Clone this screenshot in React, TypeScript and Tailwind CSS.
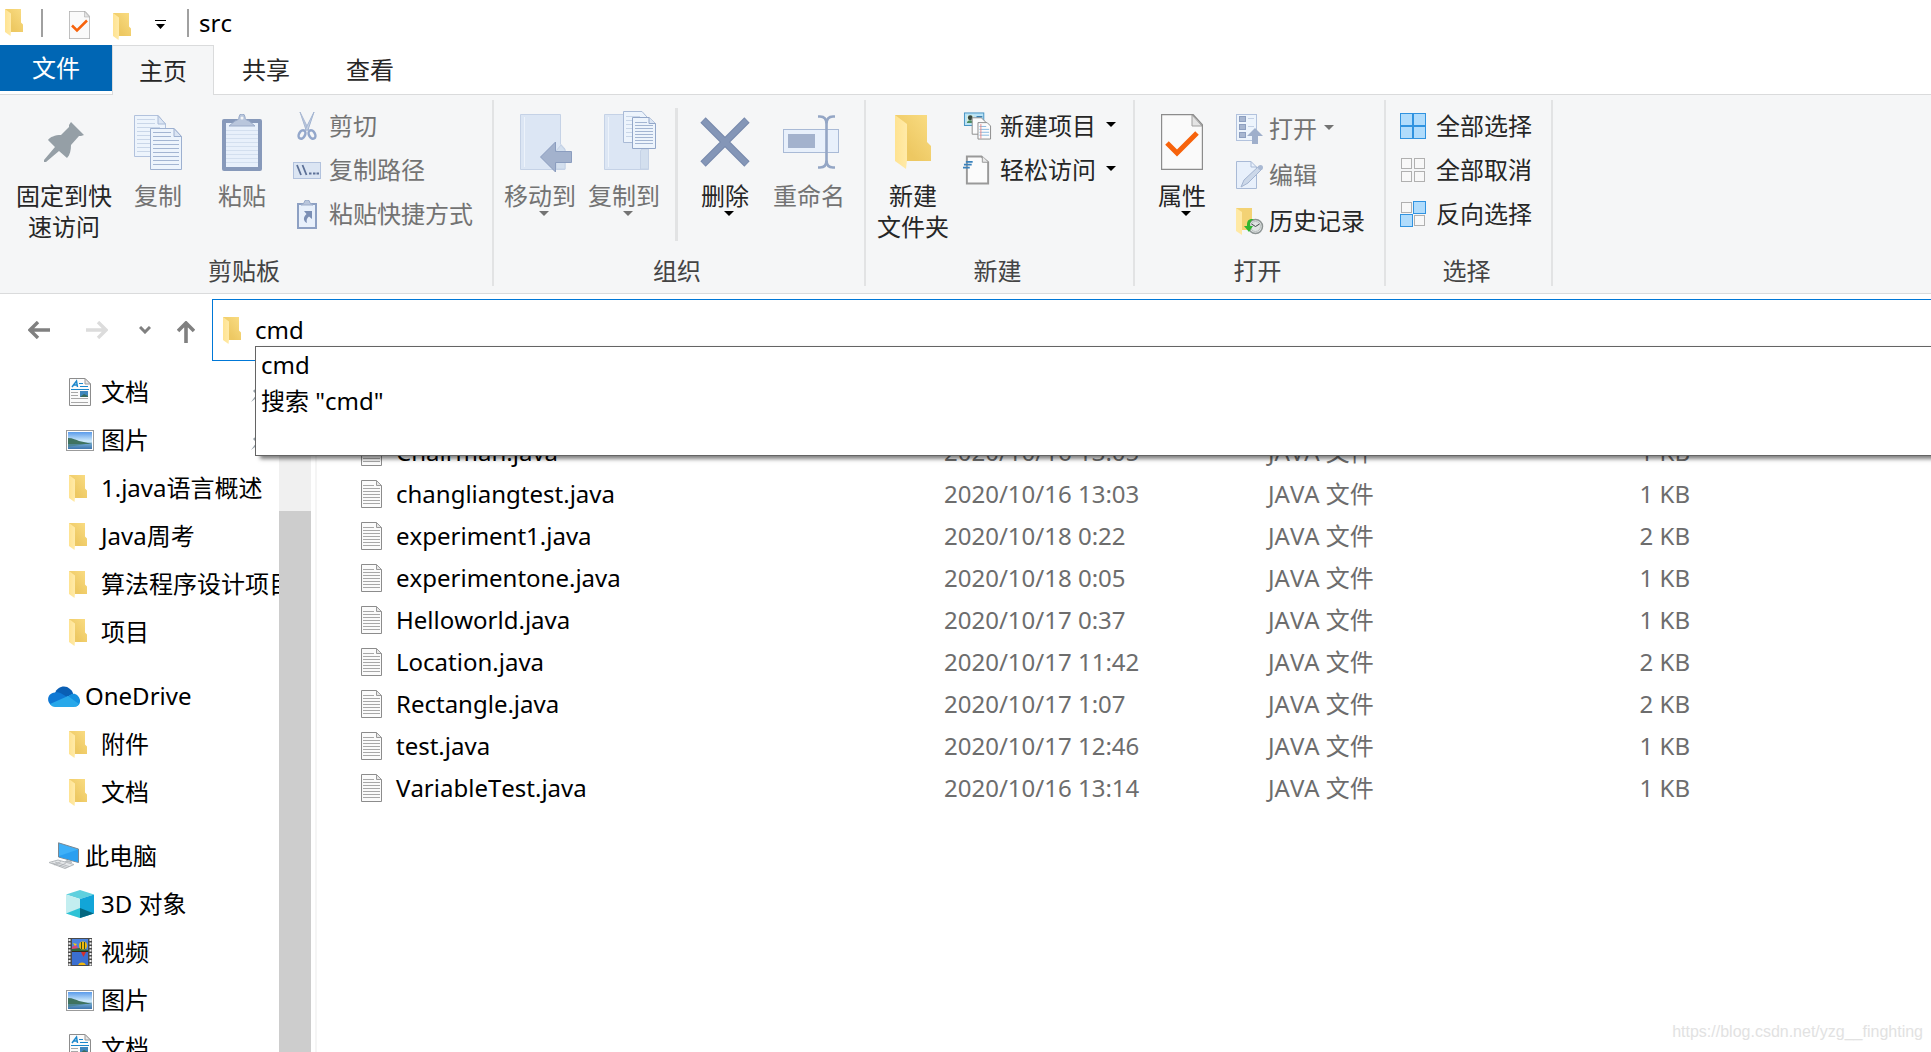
import React, { useState } from "react";
import clsx from "clsx";

/* ---------- icons ---------- */

function FolderIcon({ className = "w-[18px] h-[27px]" }) {
  return (
    <svg viewBox="0 0 36 54" preserveAspectRatio="none" className={className}>
      <defs>
        <linearGradient id="folderBack" x1="0" x2="1" y1="1" y2="0">
          <stop offset="0.3" stopColor="#edc862" />
          <stop offset="1" stopColor="#fadd84" />
        </linearGradient>
        <linearGradient id="folderFlap" x1="0" x2="1">
          <stop offset="0" stopColor="#ffe391" />
          <stop offset="1" stopColor="#ffeaa8" />
        </linearGradient>
      </defs>
      <path d="M0 0H32V27L36 31V46H4Z" fill="url(#folderBack)" />
      <path d="M0 0L12 9V45L11 54L0 46Z" fill="url(#folderFlap)" />
    </svg>
  );
}

function CheckDocIcon({ className = "w-[21px] h-7" }) {
  return (
    <svg viewBox="0 0 42 56" className={className}>
      <path d="M.5 .5H32L41.500 11V55.500H.5Z" fill="#fafafa" stroke="#8c8c8c" strokeWidth="1.400" />
      <path d="M31 1V12H41Z" fill="#e4e4e4" stroke="#a0a0a0" strokeWidth="1" />
      <path d="M6 29L16 39L36 19" fill="none" stroke="#f7630c" strokeWidth="5" />
    </svg>
  );
}

function PinIcon() {
  return (
    <svg viewBox="0 0 40 40" className="w-10 h-10">
      <path
        d="M27 0L40 13L37 14L35 14L27 23C27 28 26 33 23 36L15 29L2 40L0 40V38L11 25L4 18C6 15 11 13 17 13L25 5L25 3Z"
        fill="#959fa6"
      />
    </svg>
  );
}

function CopyIcon() {
  return (
    <svg viewBox="0 0 48 55" className="w-12 h-[55px]">
      <path d="M.5 .5H24L31.500 9V41.500H.5Z" fill="#edf4fc" stroke="#b2c2dd" />
      <path d="M24 .5V9H31.500Z" fill="#dbe5f3" stroke="#a9bad6" />
      <path d="M3 4.500H21M3 8.500H21M3 12.500H26M3 16.500H28M3 20.500H28M3 24.500H28M3 28.500H28M3 32.500H28M3 36.500H28" stroke="#c9d6e8" />
      <path d="M16.500 13.500H40L47.500 21.500V54.500H16.500Z" fill="#edf4fc" stroke="#9db0d0" />
      <path d="M40 13.500V21.500H47.500Z" fill="#dbe5f3" stroke="#9db0d0" />
      <path d="M19 17.500H37M19 21.500H37M19 25.500H45M19 29.500H45M19 33.500H45M19 37.500H45M19 41.500H45M19 45.500H45M19 49.500H45" stroke="#a3b5d2" />
    </svg>
  );
}

function PasteIcon() {
  return (
    <svg viewBox="0 0 40 57" className="w-10 h-[57px]">
      <rect y="5" width="40" height="52" rx="2" fill="#8799ba" />
      <rect x="4" y="9" width="32" height="44" fill="#e8f0fb" />
      <path d="M4 16.500H36M4 20.500H36M4 24.500H36M4 28.500H36M4 32.500H36M4 36.500H36M4 40.500H36M4 44.500H36M4 48.500H36" stroke="#d3dfef" />
      <path d="M7 12L13 7C16 6 17 5 17 3A3 3 0 0 1 23 3C23 5 24 6 27 7L33 12Z" fill="#b9c6dc" stroke="#9aabc9" />
      <circle cx="20" cy="4" r="1.500" fill="#f5f6f7" />
    </svg>
  );
}

function CutIcon() {
  return (
    <svg viewBox="0 0 20 28" className="w-5 h-7">
      <path d="M3 0L12 18L9 18Z" fill="#b7c5dc" stroke="#aab9d3" />
      <path d="M17 0L8 18L11 18Z" fill="#c3cfe2" stroke="#a3b4d1" />
      <ellipse cx="5" cy="22.500" rx="3" ry="4.500" transform="rotate(28 5 22.500)" fill="none" stroke="#93a7cb" strokeWidth="2.500" />
      <ellipse cx="15" cy="22.500" rx="3" ry="4.500" transform="rotate(-28 15 22.500)" fill="none" stroke="#93a7cb" strokeWidth="2.500" />
    </svg>
  );
}

function PathIcon() {
  return (
    <svg viewBox="0 0 28 17" className="w-7 h-[17px]">
      <rect x=".5" y=".5" width="27" height="16" fill="#dbe5f3" stroke="#b2c2dd" />
      <path d="M4 3L8 13M9.500 3L13.500 13" stroke="#5d7197" strokeWidth="1.800" />
      <path d="M16 11.500H18.500M20 11.500H22.500M23.500 11.500H26" stroke="#5d7197" strokeWidth="2" />
    </svg>
  );
}

function ShortcutIcon() {
  return (
    <svg viewBox="0 0 20 29" className="w-5 h-[29px]">
      <rect x="1" y="4" width="18" height="24" fill="#e8f0fb" stroke="#8da0c3" strokeWidth="2" />
      <path d="M4 5H16L13 3A3 3 0 0 0 7 3Z" fill="#b9c6dc" stroke="#9aabc9" />
      <path d="M7 11H15V19L12 16.500C10 18 9 20 10 23C6 21 6 17 9.500 14Z" fill="#7b8fb5" />
    </svg>
  );
}

function MoveToIcon() {
  return (
    <svg viewBox="0 0 52 62" className="w-[52px] h-[62px] ml-3">
      <path d="M.5 3.500H40.500V33L45 38V58.500H.5Z" fill="#dce6f4" stroke="#c5d2e6" />
      <path d="M4.500 6V56" stroke="#edf3fb" />
      <path d="M36 40L41 34L45 39V58H36Z" fill="#d3dfee" stroke="#c5d2e6" />
      <path d="M20.500 46L35.500 31V40.500H51.500V51.500H35.500V61Z" fill="#a3b2cd" stroke="#8b9dbf" />
    </svg>
  );
}

function CopyToIcon() {
  return (
    <svg viewBox="0 0 52 62" className="w-[52px] h-[62px] ml-3">
      <path d="M.5 3.500H40.500V36L44.500 40V58.500H.5Z" fill="#dce6f4" stroke="#c5d2e6" />
      <path d="M4.500 6V56" stroke="#edf3fb" />
      <path d="M36.500 58V40L38 38H44.500V58Z" fill="#d3dfee" stroke="#c5d2e6" />
      <path d="M19.500 .5H38L43 6V31.500H19.500Z" fill="#edf4fc" stroke="#a9bad6" />
      <path d="M22 5.500H36M22 9.500H28M22 13.500H28M22 17.500H28M22 21.500H28M22 25.500H28" stroke="#c9d6e8" />
      <path d="M28.500 6.500H45L51.500 12.500V37.500H28.500Z" fill="#edf4fc" stroke="#93a7c9" />
      <path d="M45 6.500V12.500H51.500" fill="#dbe5f3" stroke="#93a7c9" />
      <path d="M31 11.500H43M31 14.500H49M31 17.500H49M31 20.500H49M31 23.500H49M31 26.500H49M31 29.500H49M31 32.500H49" stroke="#a3b5d2" />
    </svg>
  );
}

function DeleteIcon() {
  return (
    <svg viewBox="0 0 50 50" className="w-[50px] h-[50px]">
      <path d="M3 3L47 47M47 3L3 47" stroke="#7688ac" strokeWidth="7.500" />
      <path d="M3.500 3.500L46.500 46.500M46.500 3.500L3.500 46.500" stroke="#8496b7" strokeWidth="5.500" />
    </svg>
  );
}

function RenameIcon() {
  return (
    <svg viewBox="0 0 56 54" className="w-14 h-[54px] ml-1">
      <rect x=".5" y="14.500" width="55" height="23" fill="#e8f0fb" stroke="#a9bad6" />
      <rect x="5" y="19" width="27" height="14" fill="#a3b2cd" />
      <path d="M35 1.500H37Q43.500 1.500 43.500 9V45Q43.500 52.500 37 52.500H35M52 1.500H50Q43.500 1.500 43.500 9V45Q43.500 52.500 50 52.500H52" fill="none" stroke="#94a6c5" strokeWidth="2.600" />
    </svg>
  );
}

function NewItemIcon() {
  return (
    <svg viewBox="0 0 30 28" className="w-[30px] h-7">
      <rect x="1.500" y=".5" width="20" height="13" fill="#b9e3f7" stroke="#4592c2" />
      <rect x="4" y="3" width="7" height="8" fill="#d9efdf" />
      <circle cx="7.500" cy="5.500" r="2.500" fill="#38473d" />
      <path d="M4 11C4 7 11 7 11 11Z" fill="#4b8c62" />
      <path d="M14 4.500H20" stroke="#2e75a8" strokeWidth="1.500" />
      <path d="M9.500 5.500H19L23.500 10V22.500H9.500Z" fill="#fcfcfc" stroke="#8c8c8c" />
      <path d="M15.500 10.500H25L28.500 14V27.500H15.500Z" fill="#fcfcfc" stroke="#8c8c8c" />
      <path d="M17 14.500H24M17 17.500H27M17 20.500H27M17 23.500H27" stroke="#88b8e0" />
      <path d="M18.500 12V27" stroke="#e58a8a" />
    </svg>
  );
}

function EasyAccessIcon() {
  return (
    <svg viewBox="0 0 30 30" className="w-[30px] h-[30px]">
      <path d="M4 1H19L26 7V29H4Z" fill="#fbfbfb" stroke="#999999" strokeWidth="2" />
      <path d="M20 1V7H26" fill="#e8e8e8" stroke="#999999" />
      <path d="M3 6.500H10M1 9.500H9M0 12.500H7" stroke="#3a82bc" strokeWidth="1.800" />
    </svg>
  );
}

function OpenIcon() {
  return (
    <svg viewBox="0 0 28 30" className="w-7 h-[30px]">
      <rect x=".5" y=".5" width="20" height="26" fill="#edf4fc" stroke="#b2c2dd" />
      <g fill="#a7b6d0" stroke="#8d9fc0">
        <rect x="3.500" y="2.500" width="6" height="5" />
        <rect x="3.500" y="10.500" width="6" height="5" />
        <rect x="3.500" y="18.500" width="6" height="5" />
      </g>
      <path d="M12 4.500H18M12 12.500H18" stroke="#c4d1e5" />
      <path d="M19 14L27 22H22V30H16V22H11Z" fill="#9fafcb" />
    </svg>
  );
}

function EditIcon() {
  return (
    <svg viewBox="0 0 28 30" className="w-7 h-[30px]">
      <path d="M.5 1.500H15L20.500 7V28.500H.5Z" fill="#e8f0fb" stroke="#a9bad6" />
      <path d="M15 1.500V7H20.500" fill="none" stroke="#a9bad6" />
      <path d="M5 27L8 20L23 6L26 9L12 23Z" fill="#ccd8e9" stroke="#a3b4d0" />
      <circle cx="24.500" cy="7.500" r="2.500" fill="#a9b9d3" />
    </svg>
  );
}

function HistoryIcon() {
  return (
    <svg viewBox="0 0 28 30" className="w-7 h-[30px]">
      <path d="M0 2H16V24H2Z" fill="#f3d274" />
      <path d="M0 2L6 6V29L0 25Z" fill="#ffe9a4" />
      <circle cx="19.500" cy="20.500" r="7" fill="#dfe3e3" stroke="#8d9494" strokeWidth="1.500" />
      <circle cx="19.500" cy="20.500" r="5" fill="none" stroke="#b9bfbf" />
      <path d="M15.500 18L19.500 20.500L23.500 18" fill="none" stroke="#414747" />
      <path d="M15 13C11 14 11 17 11 20H8L13 26L17 20H14C14 17 14 15 18 13Z" fill="#2fb52f" />
    </svg>
  );
}

// tiles are listed top-left, top-right, bottom-left, bottom-right
function TilesIcon({ filled }: { filled: boolean[] }) {
  const spots = [[1, 1], [14, 1], [1, 14], [14, 14]];
  return (
    <svg viewBox="0 0 27 27" className="w-[27px] h-[27px]">
      {spots.map(([x, y], i) =>
        filled[i] ? (
          <rect key={i} x={x - 0.5} y={y - 0.5} width="12" height="12" fill="#b0dcfc" stroke="#3093e0" />
        ) : (
          <rect key={i} x={x + 0.5} y={y + 0.5} width="10" height="10" fill="#f8f8f8" stroke="#b0b0b0" />
        )
      )}
    </svg>
  );
}

function TextFileIcon() {
  return (
    <svg viewBox="0 0 21 28" className="w-[21px] h-7">
      <path d="M.5 .5H15.500L20.500 5.500V27.500H.5Z" fill="#fbfbfb" stroke="#8c8c8c" />
      <path d="M15.500 .5V5.500H20.500Z" fill="#e6e6e6" stroke="#9a9a9a" />
      <path d="M2 5.500H13M2 8.500H19M2 11.500H19M2 14.500H19M2 17.500H19M2 20.500H19M2 23.500H19" stroke="#a8a8a8" />
    </svg>
  );
}

function DocumentsIcon() {
  return (
    <svg viewBox="0 0 28 28" className="w-7 h-7">
      <path d="M3.500 .5H19L24.500 6V27.500H3.500Z" fill="#fbfbfb" stroke="#8c8c8c" />
      <path d="M19 .5V6H24.500Z" fill="#e6e6e6" stroke="#9a9a9a" />
      <path d="M6 9L10.500 3L11.500 9M7.500 7H11" fill="none" stroke="#1b87cc" strokeWidth="1.500" />
      <path d="M13 5.500H17M14 8.500H22M5 11.500H23" stroke="#1b87cc" />
      <rect x="14" y="13" width="8" height="6" fill="#3f86bd" />
      <path d="M14 19L18 16L22 18V19Z" fill="#3a6b5c" />
      <path d="M5 14.500H12M5 17.500H12M5 20.500H22M5 24.500H22" stroke="#a8a8a8" />
    </svg>
  );
}

function PicturesIcon() {
  return (
    <svg viewBox="0 0 28 21" className="w-7 h-[21px]">
      <defs>
        <linearGradient id="sky" x1="0" x2="0" y1="0" y2="1">
          <stop offset="0" stopColor="#5a9bea" />
          <stop offset="0.55" stopColor="#d2ecfb" />
          <stop offset="0.7" stopColor="#6fa5cf" />
          <stop offset="1" stopColor="#3d75ad" />
        </linearGradient>
      </defs>
      <rect x=".5" y=".5" width="27" height="20" fill="#ffffff" stroke="#9b9b9b" />
      <rect x="2" y="2" width="24" height="17" fill="url(#sky)" />
      <path d="M2 8C7 8 10 10 13 11C18 12 22 13 26 14H2Z" fill="#3f7360" />
      <path d="M2 14H20L8 16L2 17Z" fill="#4e8797" />
    </svg>
  );
}

function OneDriveIcon() {
  return (
    <svg viewBox="0 0 32 21" className="w-8 h-[21px]">
      <path d="M7 7C9 1 17 -2 22 3C24 5 25 6 25 8L15 13Z" fill="#0a5fb4" />
      <path d="M6 20C-2 19 -2 7 7 6.500C10 5.500 13 7 15 8.500L21 12L9 20Z" fill="#0f78d4" />
      <path d="M19 11L22 9C26 6 31 9 32 14C32.500 18 30 20.500 27 20.500Z" fill="#1490df" />
      <path d="M2 18L20 10L31 18C30 20 28 21 26 21H7C5 21 3 20 2 18Z" fill="#28a8ea" />
    </svg>
  );
}

function ThisPcIcon() {
  return (
    <svg viewBox="0 0 32 28" className="w-8 h-7">
      <path d="M10.500 .8L30.500 7V20.500L10.500 15Z" fill="#3eb0f8" stroke="#7b8791" />
      <path d="M11 14L30 7.500V20L11 14.800Z" fill="#2a9ff0" />
      <path d="M19 18L24 19.500V21L16 20Z" fill="#b5bbbf" />
      <path d="M1 20.500L10 18L26 22.500L17 26.500Z" fill="#e6e8ea" stroke="#b5b9bc" />
      <path d="M4 21L19 25.500M7 20L21 24.500M6 23L13 19.500M11 24.500L18 21" stroke="#a6abaf" strokeWidth=".7" />
    </svg>
  );
}

function CubeIcon() {
  return (
    <svg viewBox="0 0 28 28" className="w-7 h-7">
      <path d="M0 4.500L14 0L28 4.500L14 9Z" fill="#5fd0de" />
      <path d="M0 4.500L14 9V28L0 23.500Z" fill="#c3eef0" />
      <path d="M0 23.500L14 18V28Z" fill="#2fc3d6" />
      <path d="M28 4.500L14 9V28L28 23.500Z" fill="#12a5d8" />
      <path d="M14 18L28 23.500L14 28Z" fill="#046780" />
    </svg>
  );
}

function VideosIcon() {
  return (
    <svg viewBox="0 0 28 28" className="w-7 h-7">
      <rect x="2" width="24" height="28" fill="#4a4a4a" />
      <path d="M3.500 1V28M24.500 1V28" stroke="#f2f2f2" strokeWidth="2" strokeDasharray="2 1.500" />
      <rect x="6" y="1" width="16" height="12" fill="#4d83dc" />
      <rect x="6" y="14" width="16" height="13" fill="#3b6fd0" />
      <path d="M6 9L10 7L14 13H6Z" fill="#d9467a" />
      <path d="M7 5L11 6L9 8Z" fill="#f6c915" />
      <path d="M6 11L14 10L22 12V13H6Z" fill="#2f6b3a" />
      <circle cx="17" cy="7.500" r="4" fill="#f2b90f" />
      <path d="M15.500 4V11M18.500 4V11" stroke="#38501c" />
      <path d="M15 14H20L17.500 19Z" fill="#d3302c" />
      <path d="M12 27A4.500 4.500 0 0 1 20 27Z" fill="#f2b90f" />
      <path d="M6 13.500H22" stroke="#33281a" />
    </svg>
  );
}

/* ---------- ribbon pieces ---------- */

function Caret({ className }: { className?: string }) {
  return (
    <svg viewBox="0 0 10 5" className={clsx("w-[10px] h-[5px]", className)}>
      <path d="M0 0H10L5 5Z" fill="currentColor" />
    </svg>
  );
}

type ButtonProps = {
  icon: React.ReactNode;
  lines?: string[];
  label?: string;
  dim?: boolean;
  menu?: boolean;
  width?: string;
  gap?: string;
};

function BigButton({ icon, lines = [], dim, menu, width = "w-[84px]" }: ButtonProps) {
  return (
    <button type="button" className={clsx("flex flex-col items-center shrink-0", width, dim ? "text-[#737373]" : "text-[#262626]")}>
      <span className="h-[68px] flex items-center justify-center">{icon}</span>
      <span className="mt-1 leading-[31px] whitespace-nowrap">
        {lines.map((line) => (
          <span key={line} className="block">{line}</span>
        ))}
      </span>
      {menu && <Caret className={clsx("ml-2", !dim && "text-black")} />}
    </button>
  );
}

function SmallButton({ icon, label, dim, menu, gap = "gap-2" }: ButtonProps) {
  return (
    <button type="button" className={clsx("flex items-center whitespace-nowrap leading-8", gap, dim ? "text-[#737373]" : "text-[#262626]")}>
      <span className="w-[29px] flex justify-center shrink-0">{icon}</span>
      {label}
      {menu && <Caret className={clsx("ml-0.5 -mt-1", !dim && "text-black")} />}
    </button>
  );
}

function Group({ title, className, children }: { title: string; className: string; children: React.ReactNode }) {
  return (
    <section className={clsx("flex flex-col shrink-0 border-r-2 border-[#e2e3e4] mt-[5px] mb-[7px]", className)}>
      <div className="flex-1 flex items-start pt-2">{children}</div>
      <h2 className="pr-1 text-center leading-[30px] text-[#444444]">{title}</h2>
    </section>
  );
}

/* ---------- data ---------- */

const places = [
  { name: "文档", icon: <DocumentsIcon />, pinned: true },
  { name: "图片", icon: <PicturesIcon />, pinned: true },
  { name: "1.java语言概述", icon: <FolderIcon /> },
  { name: "Java周考", icon: <FolderIcon /> },
  { name: "算法程序设计项目", icon: <FolderIcon /> },
  { name: "项目", icon: <FolderIcon /> },
  { name: "OneDrive", icon: <OneDriveIcon />, root: true },
  { name: "附件", icon: <FolderIcon /> },
  { name: "文档", icon: <FolderIcon /> },
  { name: "此电脑", icon: <ThisPcIcon />, root: true },
  { name: "3D 对象", icon: <CubeIcon /> },
  { name: "视频", icon: <VideosIcon /> },
  { name: "图片", icon: <PicturesIcon /> },
  { name: "文档", icon: <DocumentsIcon /> },
];

const files = [
  { name: "Chairman.java", date: "2020/10/16 13:05", size: "1 KB" },
  { name: "changliangtest.java", date: "2020/10/16 13:03", size: "1 KB" },
  { name: "experiment1.java", date: "2020/10/18 0:22", size: "2 KB" },
  { name: "experimentone.java", date: "2020/10/18 0:05", size: "1 KB" },
  { name: "Helloworld.java", date: "2020/10/17 0:37", size: "1 KB" },
  { name: "Location.java", date: "2020/10/17 11:42", size: "2 KB" },
  { name: "Rectangle.java", date: "2020/10/17 1:07", size: "2 KB" },
  { name: "test.java", date: "2020/10/17 12:46", size: "1 KB" },
  { name: "VariableTest.java", date: "2020/10/16 13:14", size: "1 KB" },
];

export default function App() {
  const [address, setAddress] = useState("cmd");

  return (
    <div className="relative h-screen flex flex-col overflow-hidden bg-white text-black text-[24px] font-['Noto_Sans','Noto_Sans_CJK_SC',sans-serif] [font-kerning:none]">

      {/* --- TITLE BAR --- */}
      <header className="h-[45px] shrink-0 flex items-center pl-[5px]">
        <FolderIcon />
        <span className="w-0.5 h-7 ml-[18px] bg-[#a0a0a0]" />
        <button type="button" aria-label="属性" className="ml-[26px] mt-1"><CheckDocIcon /></button>
        <button type="button" aria-label="新建文件夹" className="ml-[23px] mt-2"><FolderIcon /></button>
        <button type="button" aria-label="自定义快速访问工具栏" className="ml-6 mt-1">
          <svg viewBox="0 0 11 9" className="w-[11px] h-[9px]">
            <path d="M0 0H11V1H0ZM1 4H10L5.500 9Z" fill="#000000" />
          </svg>
        </button>
        <span className="w-0.5 h-7 ml-[21px] bg-[#a0a0a0]" />
        <h1 className="ml-[10px] leading-8">src</h1>
      </header>

      {/* --- TABS --- */}
      <nav className="h-[49px] shrink-0 flex text-[#262626]">
        <button type="button" className="w-28 h-[46px] bg-[#0066b4] text-white">文件</button>
        <button type="button" className="relative z-10 w-[102px] h-[50px] bg-[#f5f6f7] border border-b-0 border-[#dadbdc]">主页</button>
        <button type="button" className="w-[104px] h-[50px]">共享</button>
        <button type="button" className="w-[104px] h-[50px]">查看</button>
      </nav>

      {/* --- RIBBON --- */}
      <div className="h-[200px] shrink-0 flex bg-[#f5f6f7] border-y border-[#dadbdc]">
        <Group title="剪贴板" className="w-[494px]">
          <BigButton icon={<PinIcon />} lines={["固定到快", "速访问"]} width="w-[100px] ml-[14px]" />
          <BigButton icon={<CopyIcon />} lines={["复制"]} dim width="w-[88px]" />
          <BigButton icon={<PasteIcon />} lines={["粘贴"]} dim width="w-20" />
          <div className="flex flex-col gap-3 ml-[10px] pt-0.5">
            <SmallButton icon={<CutIcon />} label="剪切" dim />
            <SmallButton icon={<PathIcon />} label="复制路径" dim />
            <SmallButton icon={<ShortcutIcon />} label="粘贴快捷方式" dim />
          </div>
        </Group>

        <Group title="组织" className="w-[372px]">
          <BigButton icon={<MoveToIcon />} lines={["移动到"]} dim menu width="w-[84px] ml-1" />
          <BigButton icon={<CopyToIcon />} lines={["复制到"]} dim menu />
          <span className="w-[3px] h-[133px] ml-[9px] bg-[#e2e3e4]" />
          <BigButton icon={<DeleteIcon />} lines={["删除"]} menu width="w-[84px] ml-[5px]" />
          <BigButton icon={<RenameIcon />} lines={["重命名"]} dim />
        </Group>

        <Group title="新建" className="w-[269px]">
          <BigButton icon={<FolderIcon className="w-9 h-[54px]" />} lines={["新建", "文件夹"]} width="w-[84px] ml-[5px]" />
          <div className="flex flex-col gap-3 ml-2 pt-0.5">
            <SmallButton icon={<NewItemIcon />} label="新建项目" menu />
            <SmallButton icon={<EasyAccessIcon />} label="轻松访问" menu />
          </div>
        </Group>

        <Group title="打开" className="w-[251px]">
          <BigButton icon={<CheckDocIcon className="w-[42px] h-14" />} lines={["属性"]} menu width="w-[84px] ml-[5px]" />
          <div className="flex flex-col gap-[14px] ml-[11px] pt-[5px]">
            <SmallButton icon={<OpenIcon />} label="打开" dim menu gap="gap-[5px]" />
            <SmallButton icon={<EditIcon />} label="编辑" dim gap="gap-[5px]" />
            <SmallButton icon={<HistoryIcon />} label="历史记录" gap="gap-[5px]" />
          </div>
        </Group>

        <Group title="选择" className="w-[167px]">
          <div className="flex flex-col gap-3 ml-[13px] pt-0.5">
            <SmallButton icon={<TilesIcon filled={[true, true, true, true]} />} label="全部选择" />
            <SmallButton icon={<TilesIcon filled={[false, false, false, false]} />} label="全部取消" />
            <SmallButton icon={<TilesIcon filled={[false, true, true, false]} />} label="反向选择" />
          </div>
        </Group>
      </div>

      {/* --- ADDRESS ROW --- */}
      <div className="shrink-0 flex items-center pt-[5px] pb-[7px]">
        <div className="w-[212px] shrink-0 flex items-center pl-7 text-[#808080]">
          <button type="button" aria-label="后退">
            <svg viewBox="0 0 22 18" className="w-[22px] h-[18px]">
              <path d="M10 1L2 9L10 17M2 9H22" fill="none" stroke="currentColor" strokeWidth="3.400" />
            </svg>
          </button>
          <button type="button" aria-label="前进" className="ml-9 text-[#dcdcdc]">
            <svg viewBox="0 0 22 18" className="w-[22px] h-[18px]">
              <path d="M12 1L20 9L12 17M20 9H0" fill="none" stroke="currentColor" strokeWidth="3.400" />
            </svg>
          </button>
          <button type="button" aria-label="最近浏览的位置" className="ml-[31px]">
            <svg viewBox="0 0 12 8" className="w-3 h-2">
              <path d="M1 1L6 6L11 1" fill="none" stroke="currentColor" strokeWidth="3" />
            </svg>
          </button>
          <button type="button" aria-label="上移" className="ml-[26px] mt-1">
            <svg viewBox="0 0 18 22" className="w-[18px] h-[22px]">
              <path d="M1 10L9 2L17 10M9 2V22" fill="none" stroke="currentColor" strokeWidth="3.600" />
            </svg>
          </button>
        </div>

        <div className="relative flex-1 h-[62px] flex items-center pl-[10px] border border-r-0 border-[#0078d7]">
          <FolderIcon />
          <input
            type="text"
            aria-label="地址"
            value={address}
            onChange={(e) => setAddress(e.target.value)}
            className="flex-1 ml-[14px] leading-8 outline-none"
          />

          {/* Suggestions */}
          <ul className="absolute z-20 left-[42px] right-0 top-[46px] h-[110px] bg-white border border-r-0 border-[#646464] shadow-[5px_3px_4px_rgba(0,0,0,0.5)]">
            <li><button type="button" className="block w-full text-left pl-[5px] leading-9">cmd</button></li>
            <li><button type="button" className="block w-full text-left pl-[5px] leading-9">搜索 "cmd"</button></li>
          </ul>
        </div>
      </div>

      {/* --- BODY --- */}
      <div className="flex-1 min-h-0 flex">
        <aside className="w-[279px] shrink-0 overflow-hidden">
          {places.map((place, i) => (
            <a
              key={i}
              href="#"
              className={clsx("h-12 flex items-center whitespace-nowrap", place.root ? "mt-4 pl-12 gap-[5px]" : "pl-[66px] gap-[7px]")}
            >
              <span className={clsx("shrink-0 flex", place.root ? "w-8" : "w-7", place.icon.type === FolderIcon && "pl-[3px]")}>
                {place.icon}
              </span>
              <span className="flex-1">{place.name}</span>
              {place.pinned && (
                <svg viewBox="0 0 40 40" className="w-5 h-5 mr-2">
                  <path d="M27 0L40 13L35 14L27 23C27 28 26 33 23 36L15 29L0 40L11 25L4 18C6 15 11 13 17 13L25 5Z" fill="#959fa6" />
                </svg>
              )}
            </a>
          ))}
        </aside>
        <div className="w-8 shrink-0 bg-[#f0f0f0] pt-[143px]">
          <div className="h-full bg-[#cdcdcd]" />
        </div>
        <div className="w-[6px] shrink-0 border-r-2 border-[#f5f5f5]" />

        <main className="flex-1 min-w-0 pl-11 pt-[63px]">
          <table className="table-fixed w-[1329px] text-left">
            <colgroup>
              <col className="w-[583px]" />
              <col className="w-[324px]" />
              <col className="w-[280px]" />
              <col />
            </colgroup>
            <tbody>
              {files.map((file) => (
                <tr key={file.name} className="h-[42px] leading-8 text-[#6d6d6d]">
                  <td className="p-0">
                    <span className="flex items-center gap-[14px] text-black">
                      <TextFileIcon />
                      {file.name}
                    </span>
                  </td>
                  <td className="p-0">{file.date}</td>
                  <td className="p-0">JAVA 文件</td>
                  <td className="p-0 text-right">{file.size}</td>
                </tr>
              ))}
            </tbody>
          </table>
        </main>
      </div>

      <p className="absolute right-2 bottom-2 text-[16px] leading-6 text-[#e2e2e2] font-['Liberation_Sans',Arial,sans-serif]">
        https://blog.csdn.net/yzg__finghting
      </p>
    </div>
  );
}
